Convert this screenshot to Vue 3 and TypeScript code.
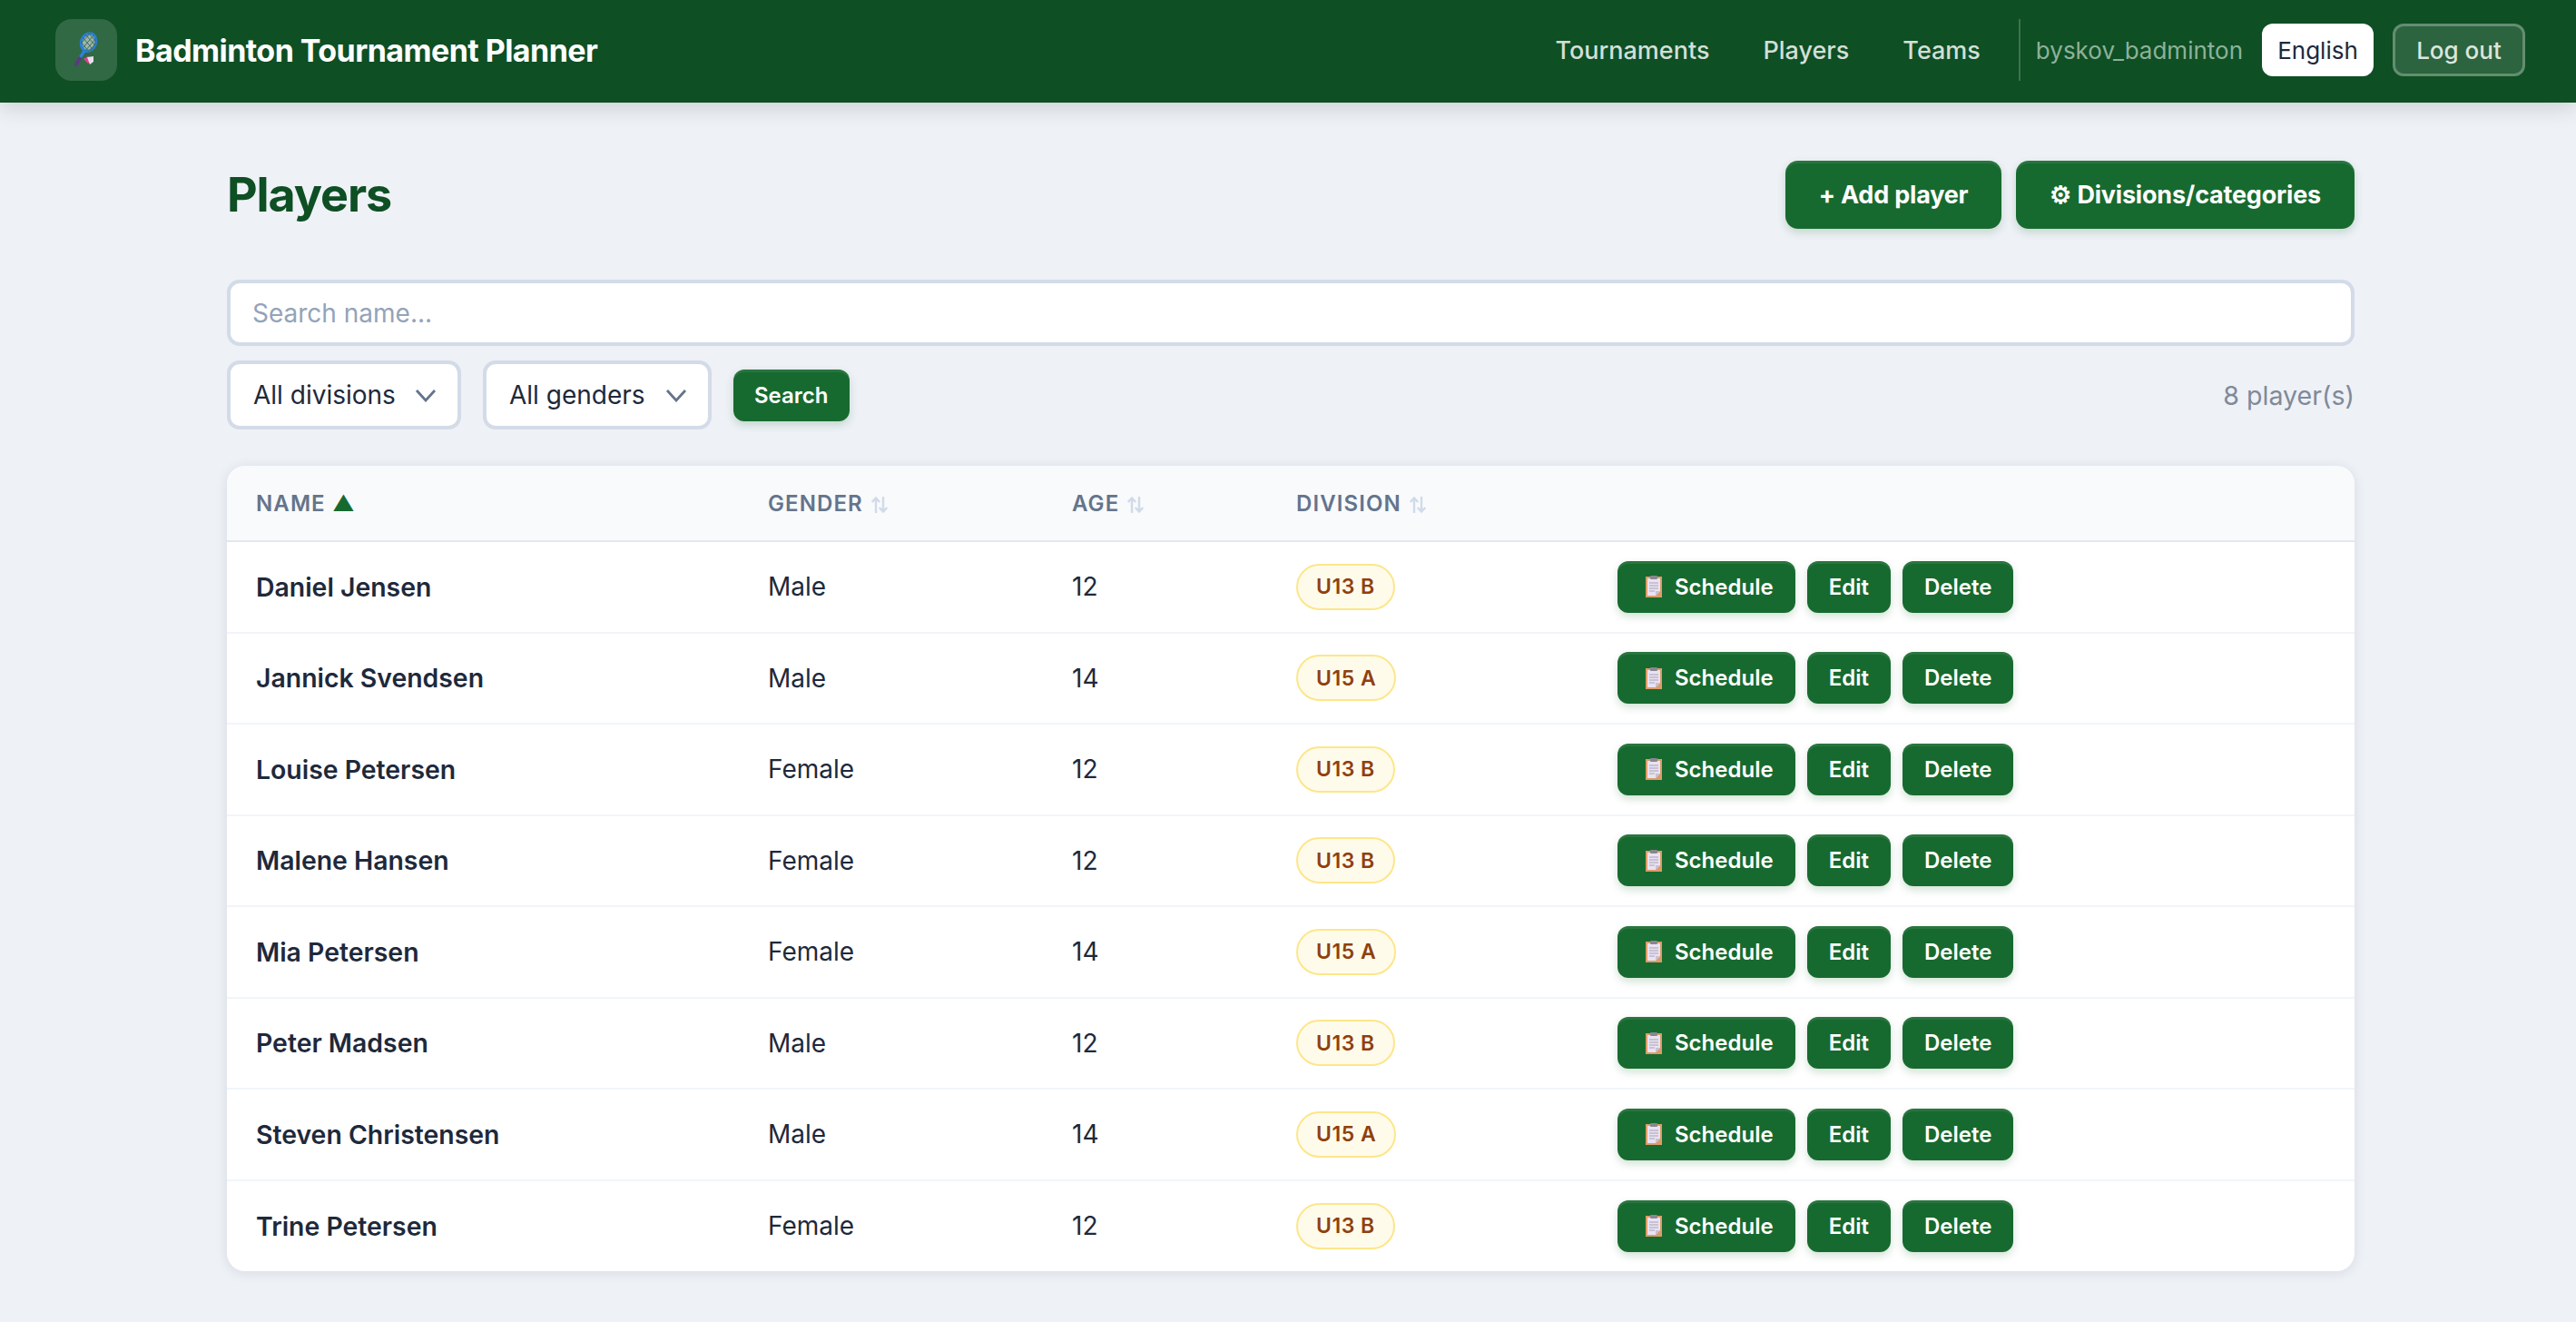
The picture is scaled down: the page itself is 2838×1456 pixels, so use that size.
<script setup lang="ts">
interface Player { name: string; gender: string; age: number; division: string }
const players: Player[] = [
  { name: 'Daniel Jensen', gender: 'Male', age: 12, division: 'U13 B' },
  { name: 'Jannick Svendsen', gender: 'Male', age: 14, division: 'U15 A' },
  { name: 'Louise Petersen', gender: 'Female', age: 12, division: 'U13 B' },
  { name: 'Malene Hansen', gender: 'Female', age: 12, division: 'U13 B' },
  { name: 'Mia Petersen', gender: 'Female', age: 14, division: 'U15 A' },
  { name: 'Peter Madsen', gender: 'Male', age: 12, division: 'U13 B' },
  { name: 'Steven Christensen', gender: 'Male', age: 14, division: 'U15 A' },
  { name: 'Trine Petersen', gender: 'Female', age: 12, division: 'U13 B' },
]
const sortable: string[] = ['Gender', 'Age', 'Division']
</script>

<template>
  <div class="page">
    <header class="topbar">
      <div class="brand">
        <span class="logo">
          <svg viewBox="0 0 68 68" width="68" height="68">
            <path d="M23 50 L27.5 42" stroke="#5c3a80" stroke-width="4" stroke-linecap="round" />
            <path d="M27.5 42 L32 35" stroke="#2f7fd6" stroke-width="3.4" />
            <ellipse cx="36.5" cy="25.5" rx="8" ry="10" transform="rotate(22 36.5 25.5)" fill="#9fb6ac" stroke="#2a80dc" stroke-width="3" />
            <g stroke="#3f6f5c" stroke-width="1">
              <path d="M30 20 L41 33 M33 17 L44 29 M36 15 L45 25 M28 25 L37 36" />
              <path d="M43 17 L30 32 M45 21 L33 35 M39 15 L28 27 M45 26 L38 35" />
            </g>
            <path d="M31 44 L36 41 L40 46 L36 49 Z" fill="#e0408c" />
            <path d="M35 42 L42 41 L42 47 L38 50 Z" fill="#e6e0ee" />
          </svg>
        </span>
        <span class="brand-name">Badminton Tournament Planner</span>
      </div>
      <nav class="nav">
        <a class="nav-link">Tournaments</a>
        <a class="nav-link">Players</a>
        <a class="nav-link">Teams</a>
        <div class="user-area">
          <span class="username">byskov_badminton</span>
          <button class="lang">English</button>
          <button class="logout">Log out</button>
        </div>
      </nav>
    </header>

    <main class="content">
      <div class="head-row">
        <h1>Players</h1>
        <div class="head-actions">
          <button class="btn btn-lg">+ Add player</button>
          <button class="btn btn-lg">⚙ Divisions/categories</button>
        </div>
      </div>

      <input class="search" type="text" placeholder="Search name..." />
      <div class="filters">
        <select class="select">
          <option>All divisions</option>
          <option>U13 B</option>
          <option>U15 A</option>
        </select>
        <select class="select">
          <option>All genders</option>
          <option>Male</option>
          <option>Female</option>
        </select>
        <button class="btn btn-sm btn-search">Search</button>
        <span class="count">8 player(s)</span>
      </div>

      <div class="card">
        <table>
          <colgroup>
            <col class="c-name" /><col class="c-gender" /><col class="c-age" /><col class="c-div" /><col />
          </colgroup>
          <thead>
            <tr>
              <th>Name <span class="sort-on">▲</span></th>
              <th v-for="col in sortable" :key="col">
                {{ col }}
                <svg class="sort" viewBox="0 0 18 18" width="18" height="18">
                  <path d="M5 18 V1.5 M0.8 6 L5 1.5 L9.2 6" />
                  <path d="M13 0 V16.5 M8.8 12 L13 16.5 L17.2 12" />
                </svg>
              </th>
              <th></th>
            </tr>
          </thead>
          <tbody>
            <tr v-for="p in players" :key="p.name">
              <td class="name">{{ p.name }}</td>
              <td>{{ p.gender }}</td>
              <td>{{ p.age }}</td>
              <td><span class="badge">{{ p.division }}</span></td>
              <td>
                <div class="actions">
                  <button class="btn btn-sm">
                    <svg class="clip" viewBox="0 0 18 24" width="18" height="24">
                      <rect x="0" y="1" width="18" height="23" fill="#dd9c68" />
                      <path d="M2 3 H16 V17 L11 22 H2 Z" fill="#e9e2f2" />
                      <path d="M11 22 L11 17 H16 Z" fill="#c9bfd6" />
                      <rect x="5" y="0" width="8" height="4" rx="1" fill="#8a8690" />
                      <path d="M4 8 H14 M4 11 H14 M4 14 H14 M4 17 H10" stroke="#a9a2b4" stroke-width="1.2" />
                    </svg>Schedule
                  </button>
                  <button class="btn btn-sm">Edit</button>
                  <button class="btn btn-sm">Delete</button>
                </div>
              </td>
            </tr>
          </tbody>
        </table>
      </div>
    </main>
  </div>
</template>

<style>
html, body { margin: 0; background: #eef1f6; }
</style>

<style scoped>
.page {
  min-height: 1456px;
  background: #eef1f6;
  font-family: Inter, "Noto Sans", sans-serif;
  color: #1e293b;
  font-size: 28px;
}
.topbar {
  height: 113px;
  box-sizing: border-box;
  padding: 0 56px 3px 61px;
  background: #0e4f24;
  box-shadow: 0 4px 24px rgba(0, 0, 0, 0.16);
  display: flex;
  align-items: center;
  justify-content: space-between;
}
.brand { display: flex; align-items: center; gap: 20px; }
.logo {
  width: 68px;
  height: 68px;
  border-radius: 18px;
  background: rgba(255, 255, 255, 0.15);
  display: block;
}
.logo svg { display: block; }
.brand-name { color: #fff; font-size: 34px; font-weight: 700; letter-spacing: -0.55px; }
.nav { display: flex; align-items: center; gap: 59px; }
.nav-link { color: #d3dfd7; font-size: 27px; font-weight: 500; }
.user-area {
  display: flex;
  align-items: center;
  gap: 21px;
  height: 68px;
  padding-left: 17px;
  margin-left: -17px;
  border-left: 2px solid rgba(255, 255, 255, 0.2);
}
.username { color: #8db29a; font-size: 26px; }
.lang, .logout {
  height: 58px;
  box-sizing: border-box;
  border-radius: 12px;
  font-family: inherit;
  font-size: 26px;
  font-weight: 500;
}
.lang { width: 123px; padding: 0; border: 0; background: #fff; color: #1e293b; font-weight: 400; }
.logout {
  width: 146px;
  padding: 0;
  background: rgba(255, 255, 255, 0.12);
  border: 3px solid rgba(255, 255, 255, 0.27);
  color: #dbe6de;
}

.content { padding: 64px 244px 0 250px; display: flex; flex-direction: column; }
.head-row { display: flex; align-items: center; justify-content: space-between; }
h1 { margin: 0; color: #0e4f24; font-size: 52px; font-weight: 700; letter-spacing: -1.1px; }
.head-actions { display: flex; gap: 16px; }

.btn {
  font-family: inherit;
  color: #fff;
  background: #176a2f;
  border: 0;
  font-weight: 600;
  box-shadow: inset 0 3px 0 rgba(255, 255, 255, 0.08), 0 4px 10px rgba(23, 106, 47, 0.2);
  white-space: nowrap;
}
.btn-lg { height: 75px; padding: 0 37px; font-size: 27px; letter-spacing: -0.2px; font-weight: 700; border-radius: 14px; }
.btn-sm { height: 57px; padding: 0 24px; font-size: 24px; border-radius: 12px; display: inline-flex; align-items: center; }
.btn-search { padding: 0 23px; }

.search {
  margin-top: 56px;
  height: 73px;
  box-sizing: border-box;
  border: 4px solid #d3dbe8;
  border-radius: 14px;
  background: #fff;
  padding: 0 24px;
  font-family: inherit;
  font-size: 28px;
  color: #1e293b;
  outline: none;
}
.search::placeholder { color: #94a3b8; }
.filters { margin-top: 16px; display: flex; align-items: center; gap: 24px; }
.select {
  appearance: none;
  height: 76px;
  box-sizing: border-box;
  border: 4px solid #d3dbe8;
  border-radius: 14px;
  padding: 0 68px 0 25px;
  font-family: inherit;
  font-size: 28px;
  color: #1e293b;
  background: #fff url("data:image/svg+xml,%3Csvg xmlns='http://www.w3.org/2000/svg' width='24' height='15' viewBox='0 0 24 15'%3E%3Cpath d='M2 2 L12 13 L22 2' fill='none' stroke='%2364748b' stroke-width='2.8'/%3E%3C/svg%3E") no-repeat right 23px center;
}
.select + .select { padding-right: 69px; }
.count { margin-left: auto; color: #7f8a99; font-size: 28.6px; }

.card {
  margin-top: 40px;
  background: #fff;
  border-radius: 20px;
  overflow: hidden;
  box-shadow: 0 2px 14px rgba(15, 40, 70, 0.1);
}
table { width: 100%; border-collapse: collapse; table-layout: fixed; }
.c-name { width: 564px; }
.c-gender { width: 335px; }
.c-age { width: 247px; }
.c-div { width: 354px; }
th {
  height: 82px;
  padding: 0 32px;
  background: #f8fafc;
  border-bottom: 2px solid #e2e8f0;
  color: #64748b;
  font-size: 24px;
  font-weight: 600;
  text-align: left;
  text-transform: uppercase;
  letter-spacing: 1.1px;
}
.sort-on { color: #176a2f; font-size: 24px; letter-spacing: 0; }
.sort {
  margin-left: 2px;
  vertical-align: -2px;
  fill: none;
  stroke: #cfdbea;
  stroke-width: 2.4;
}
td {
  height: 100.5px;
  box-sizing: border-box;
  padding: 0 32px;
  border-bottom: 2px solid #f1f5f9;
  font-size: 28px;
}
tr:last-child td { border-bottom: 0; }
.name { font-weight: 600; font-size: 28.4px; }
.badge {
  display: inline-flex;
  align-items: center;
  height: 51px;
  box-sizing: border-box;
  padding: 0 20px;
  border-radius: 26px;
  background: #fffbeb;
  border: 2px solid #fde68a;
  color: #8f4010;
  font-size: 23px;
  font-weight: 600;
  letter-spacing: 0.5px;
}
.actions { display: flex; gap: 13px; }
.clip { margin: 0 14px 0 7px; }
</style>
